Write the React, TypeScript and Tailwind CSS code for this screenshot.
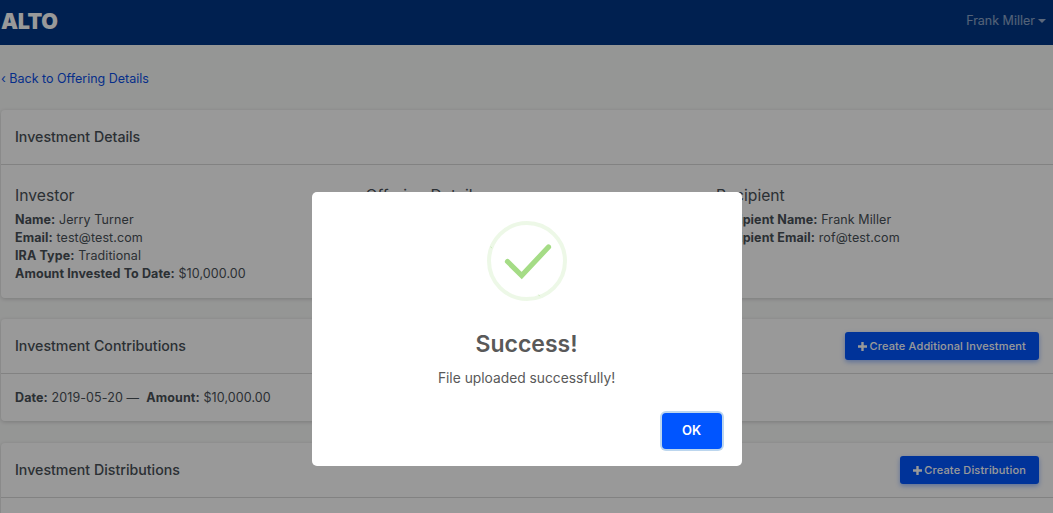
function Field({ label, value }: { label: string; value: string }) {
  return (
    <div className="h-[18px] text-[12.5px] leading-[18px] tracking-[0.1px]">
      <span className="font-bold">{label}:</span> {value}
    </div>
  )
}

function PlusIcon() {
  return (
    <svg width="9" height="9" viewBox="0 0 9 9" fill="none">
      <path d="M4.5 0.5 V8.5 M0.5 4.5 H8.5" stroke="currentColor" strokeWidth="2.4" strokeLinecap="round" />
    </svg>
  )
}

function CardHeader({ title, action }: { title: string; action?: string }) {
  return (
    <div className="flex h-[55px] items-center justify-between border-b border-black/15 px-[14px]">
      <h2 className="text-[14.2px] font-medium">{title}</h2>
      {action && (
        <button className="flex h-[28px] items-center gap-[2px] rounded-[3px] bg-[#0055ff] pl-[13px] pr-[13px] text-[11px] font-medium tracking-[0.16px] text-white shadow-[0_2px_5px_rgba(0,85,255,0.4)]">
          <PlusIcon />
          {action}
        </button>
      )}
    </div>
  )
}

function SuccessIcon() {
  return (
    <svg width="80" height="80" viewBox="0 0 80 80" fill="none">
      <circle cx="40" cy="40" r="38" stroke="#a5dc86" strokeOpacity="0.2" strokeWidth="4" />
      <path d="M3.6 25.6 L4.8 27.2 M51.4 73.6 L52.8 75.2" stroke="#a5dc86" strokeOpacity="0.7" strokeWidth="0.7" />
      <path d="M20.5 40.5 L34.7 54.5 L61.5 26" stroke="#a5dc86" strokeWidth="5.2" strokeLinecap="round" />
    </svg>
  )
}

export default function App() {
  return (
    <div className="relative h-[513px] overflow-hidden bg-[#f9faf9] font-['Inter',sans-serif] text-[#495057]">
      <nav className="flex h-[45px] items-center justify-between bg-[#003685] pb-[2px] pl-[1px] pr-[7px]">
        <span className="text-[21.5px] font-black leading-none tracking-[-0.4px] text-white">ALTO</span>
        <span className="flex items-center gap-[3px] text-[12.5px] text-white/55">
          Frank Miller
          <span className="mb-[2px] h-0 w-0 border-x-[4px] border-t-[4px] border-x-transparent border-t-white/60" />
        </span>
      </nav>

      <div className="pl-[1px] pt-[25px]">
        <a className="block h-[40px] text-[12.5px] leading-[18px] text-[#0a4ee6]">‹ Back to Offering Details</a>

        <div className="rounded-l-[4px] bg-white shadow-[0_1px_4px_rgba(0,0,0,0.18)]">
          <CardHeader title="Investment Details" />
          <div className="grid h-[133px] grid-cols-[350.5px_350.5px_1fr] pl-[14px] pt-[21px]">
            <div>
              <h3 className="mb-[5px] text-[15.7px] leading-[20px]">Investor</h3>
              <Field label="Name" value="Jerry Turner" />
              <Field label="Email" value="test@test.com" />
              <Field label="IRA Type" value="Traditional" />
              <Field label="Amount Invested To Date" value="$10,000.00" />
            </div>
            <div>
              <h3 className="mb-[5px] text-[15.7px] leading-[20px]">Offering Details</h3>
            </div>
            <div>
              <h3 className="mb-[5px] text-[15.7px] leading-[20px]">Recipient</h3>
              <Field label="Recipient Name" value="Frank Miller" />
              <Field label="Recipient Email" value="rof@test.com" />
            </div>
          </div>
        </div>

        <div className="mt-[21px] rounded-l-[4px] bg-white shadow-[0_1px_4px_rgba(0,0,0,0.18)]">
          <CardHeader title="Investment Contributions" action="Create Additional Investment" />
          <div className="flex h-[47px] items-center pl-[14px] pt-[1px] text-[12.5px] tracking-[0.1px]">
            <span className="font-bold">Date:</span>&nbsp;2019-05-20 —&nbsp;&nbsp;<span className="font-bold">Amount:</span>&nbsp;$10,000.00
          </div>
        </div>

        <div className="mt-[22px] rounded-l-[4px] bg-white shadow-[0_1px_4px_rgba(0,0,0,0.18)]">
          <CardHeader title="Investment Distributions" action="Create Distribution" />
          <div className="h-[47px]" />
        </div>
      </div>

      {/* modal backdrop */}
      <div className="absolute inset-0 flex justify-center bg-black/40 pt-[192px]">
        <div className="flex h-[274px] w-[430px] flex-col items-center rounded-[5px] bg-white">
          <div className="mt-[29px] h-[80px] w-[80px]">
            <SuccessIcon />
          </div>
          <h1 className="mt-[28px] text-[23px] font-semibold leading-[30px] text-[#595959]">Success!</h1>
          <p className="mt-[9px] text-[13.8px] leading-[20px] text-[#595959]">File uploaded successfully!</p>
          <div className="mt-[25px] flex w-full justify-end pr-[20px]">
            <button className="h-[36px] w-[60px] rounded-[4px] bg-[#0055ff] text-[13px] font-semibold text-white ring-[2px] ring-[#bcd6ee]">
              OK
            </button>
          </div>
        </div>
      </div>
    </div>
  )
}
